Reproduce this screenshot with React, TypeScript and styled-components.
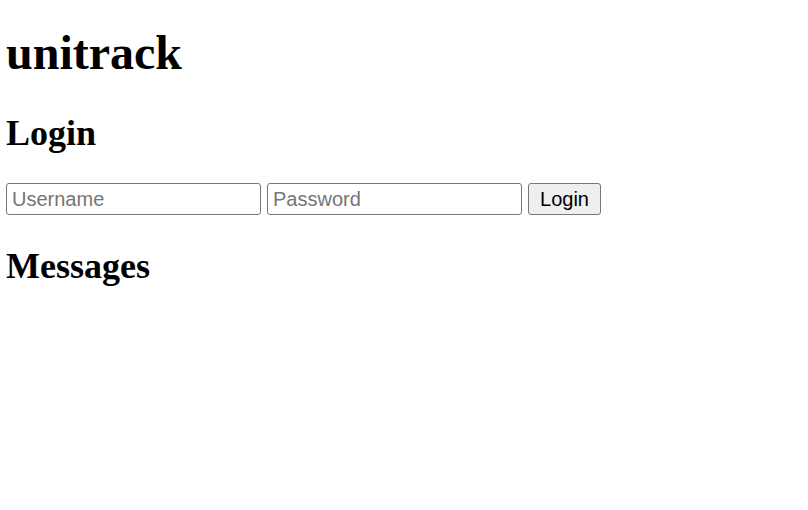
import { FC } from "react";
import styled, { createGlobalStyle } from "styled-components";

const GlobalStyle = createGlobalStyle`
  body {
    margin: 0;
    background: #fff;
    font-family: "Liberation Serif", "Times New Roman", serif;
    color: #000;
  }
`;

const Page = styled.main`
  padding: 25px 6px;
`;

const Brand = styled.h1`
  font-family: "Liberation Serif", "Times New Roman", serif;
  font-weight: 700;
  font-size: 48px;
  line-height: normal;
  margin: 0 0 32px;
`;

const Heading = styled.h2<{ $spaced?: boolean }>`
  font-family: "Liberation Serif", "Times New Roman", serif;
  font-weight: 700;
  font-size: 36px;
  line-height: normal;
  margin: ${({ $spaced }) => ($spaced ? "30px 0 0" : "0 0 26px")};
`;

const LoginForm = styled.form`
  display: flex;
  align-items: center;
  gap: 6px;
  padding-top: 3px;
`;

const Field = styled.input`
  box-sizing: border-box;
  width: 255px;
  height: 32px;
  padding: 1px 5px;
  border: 1px solid #767676;
  border-radius: 3px;
  font-family: "Liberation Sans", Arial, sans-serif;
  font-size: 20px;
  color: #000;
  background: #fff;

  &::placeholder {
    color: #757575;
  }
`;

const SubmitButton = styled.button`
  box-sizing: border-box;
  width: 73px;
  height: 32px;
  padding: 1px 0;
  border: 1px solid #767676;
  border-radius: 3px;
  background: #efefef;
  font-family: "Liberation Sans", Arial, sans-serif;
  font-size: 20px;
  color: #000;
`;

const App: FC = () => {
  return (
    <>
      <GlobalStyle />
      <Page>
        <Brand>unitrack</Brand>
        <Heading>Login</Heading>
        <LoginForm onSubmit={(e) => e.preventDefault()}>
          <Field type="text" placeholder="Username" />
          <Field type="password" placeholder="Password" />
          <SubmitButton type="submit">Login</SubmitButton>
        </LoginForm>
        <Heading $spaced>Messages</Heading>
      </Page>
    </>
  );
};

export default App;
